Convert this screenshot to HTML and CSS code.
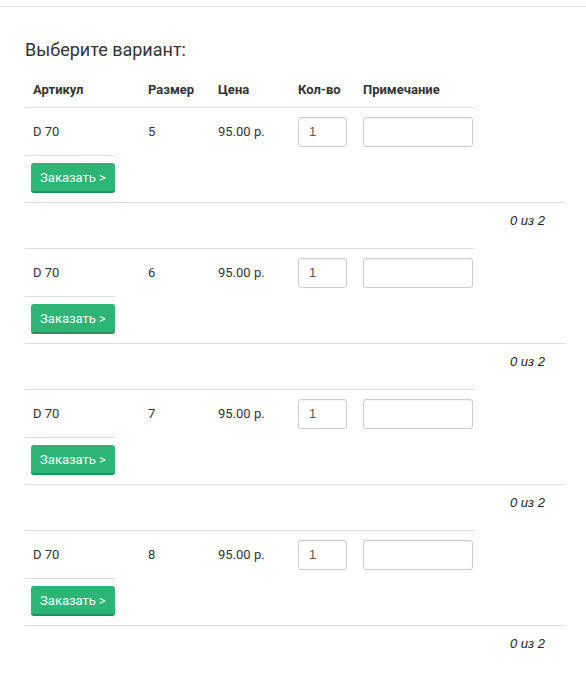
FILE: index.html
```html
<!DOCTYPE html>
<html lang="ru">
<head>
  <meta charset="UTF-8" />
  <title>Выберите вариант</title>
  <link rel="stylesheet" href="styles.css">
</head>
<body>
  <div class="page">
    <h3 class="title">Выберите вариант:</h3>

    <div class="variant">
      <div class="grid head">
        <div class="cell">Артикул</div>
        <div class="cell">Размер</div>
        <div class="cell">Цена</div>
        <div class="cell">Кол-во</div>
        <div class="cell">Примечание</div>
      </div>
      <div class="grid row">
        <div class="cell">D 70</div>
        <div class="cell">5</div>
        <div class="cell">95.00 р.</div>
        <div class="cell"><input class="qty" type="text" value="1"></div>
        <div class="cell"><input class="note" type="text"></div>
      </div>
      <div class="order"><button class="btn-order">Заказать &gt;</button></div>
      <div class="count">0 из 2</div>
    </div>

    <div class="variant">
      <div class="grid row">
        <div class="cell">D 70</div>
        <div class="cell">6</div>
        <div class="cell">95.00 р.</div>
        <div class="cell"><input class="qty" type="text" value="1"></div>
        <div class="cell"><input class="note" type="text"></div>
      </div>
      <div class="order"><button class="btn-order">Заказать &gt;</button></div>
      <div class="count">0 из 2</div>
    </div>

    <div class="variant">
      <div class="grid row">
        <div class="cell">D 70</div>
        <div class="cell">7</div>
        <div class="cell">95.00 р.</div>
        <div class="cell"><input class="qty" type="text" value="1"></div>
        <div class="cell"><input class="note" type="text"></div>
      </div>
      <div class="order"><button class="btn-order">Заказать &gt;</button></div>
      <div class="count">0 из 2</div>
    </div>

    <div class="variant">
      <div class="grid row">
        <div class="cell">D 70</div>
        <div class="cell">8</div>
        <div class="cell">95.00 р.</div>
        <div class="cell"><input class="qty" type="text" value="1"></div>
        <div class="cell"><input class="note" type="text"></div>
      </div>
      <div class="order"><button class="btn-order">Заказать &gt;</button></div>
      <div class="count">0 из 2</div>
    </div>
  </div>
</body>
</html>
```

FILE: styles.css
```css
* {
  margin: 0;
  padding: 0;
  box-sizing: border-box;
}
body {
  font-family: Roboto, "Liberation Sans", sans-serif;
  font-size: 13px;
  color: #333;
  background: #fff;
  padding-top: 6px;
}
.page {
  border-top: 1px solid #e5e5e5;
  padding: 0 21px 0 25px;
}
.title {
  font-size: 18px;
  font-weight: 400;
  line-height: 20px;
  color: #333;
  margin-top: 33px;
  margin-bottom: 13px;
}
.grid {
  display: grid;
  grid-template-columns: 115px 70px 80px 65px 120px;
  width: 450px;
}
.cell {
  padding: 0 8px;
  display: flex;
  align-items: center;
}
.head {
  height: 34px;
  font-weight: 700;
  line-height: 18px;
}
.row {
  border-top: 1px solid #ddd;
  height: 48px;
}
input {
  height: 30px;
  border: 1px solid #ccc;
  border-radius: 3px;
  font-family: "Liberation Sans", Arial, sans-serif;
  font-size: 13px;
  color: #555;
  padding: 0 10px;
  box-shadow: inset 0 1px 1px rgba(0, 0, 0, 0.05);
  outline: none;
}
.qty {
  width: 49px;
}
.note {
  width: 110px;
}
.order {
  width: 90px;
  border-top: 1px solid #ddd;
  padding: 7px 0 9px 6px;
}
.btn-order {
  width: 84px;
  height: 30px;
  border: none;
  border-bottom: 2px solid #23915f;
  border-radius: 3px;
  background-color: #2cb574;
  color: #fff;
  font-family: Roboto, "Liberation Sans", sans-serif;
  font-size: 13px;
  cursor: pointer;
}
.count {
  border-top: 1px solid #ddd;
  height: 46px;
  padding: 10px 20px 0 0;
  text-align: right;
  font-family: "Liberation Sans", Arial, sans-serif;
  font-style: italic;
  font-size: 13px;
  line-height: 16px;
  color: #222;
}
```
